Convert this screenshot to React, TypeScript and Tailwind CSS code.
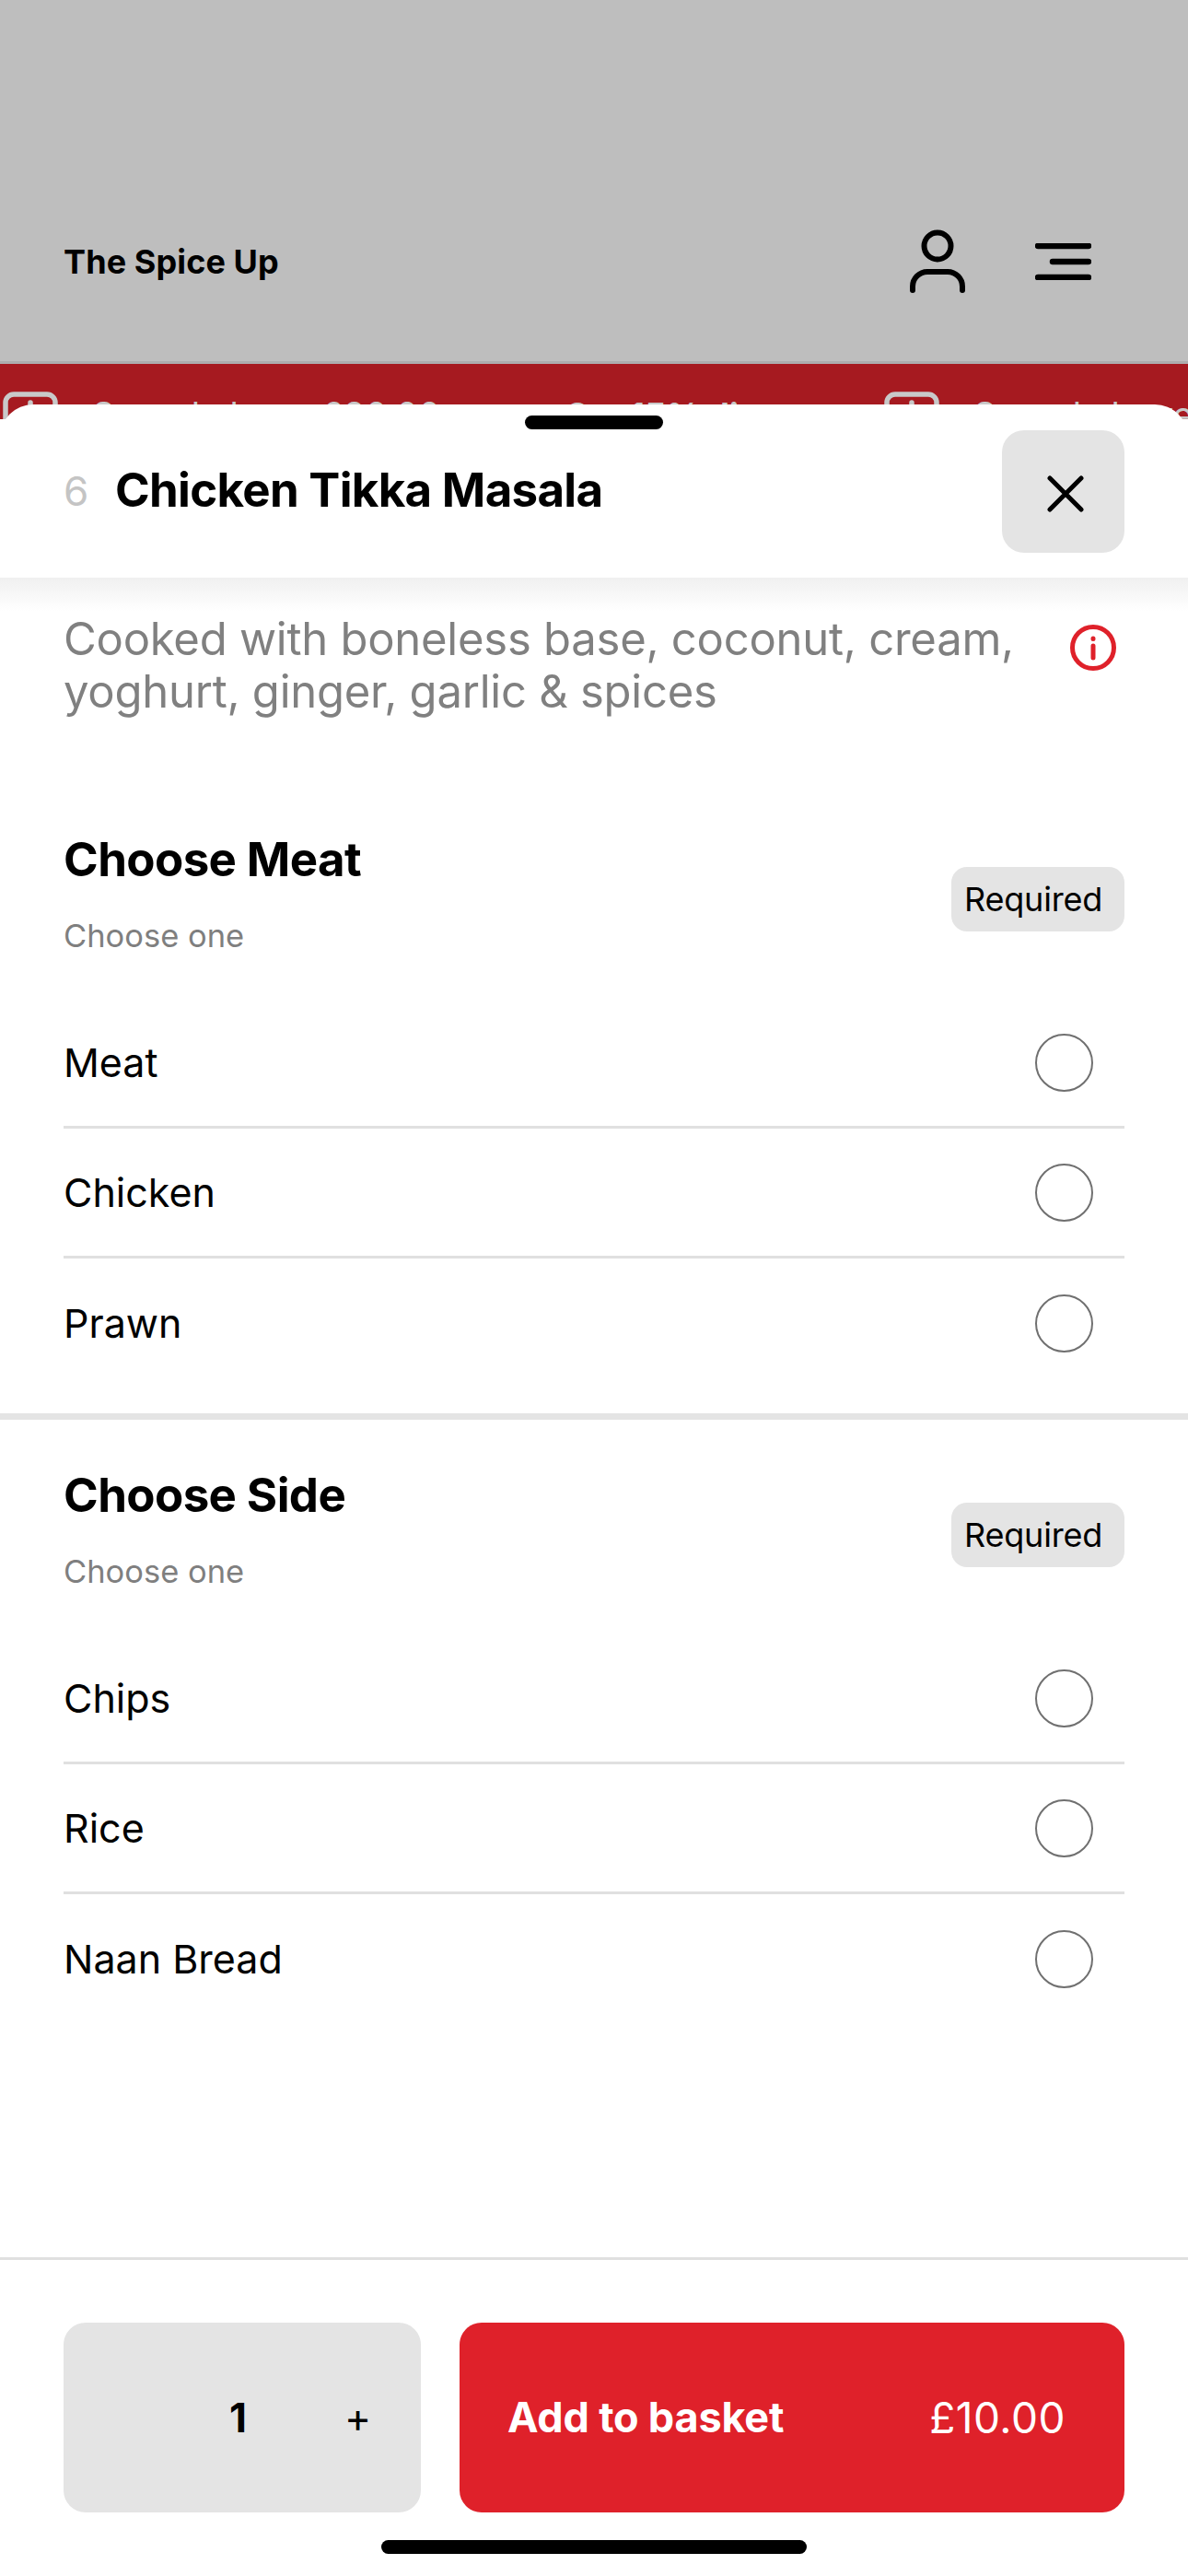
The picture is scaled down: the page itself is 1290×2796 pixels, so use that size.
import React from 'react'

const sections = [
  { title: 'Choose Meat', options: ['Meat', 'Chicken', 'Prawn'] },
  { title: 'Choose Side', options: ['Chips', 'Rice', 'Naan Bread'] },
]

function PromoTag() {
  return (
    <div className="flex items-start shrink-0 w-[957px]">
      <svg className="shrink-0" width="60" height="60" viewBox="0 0 60 60" fill="none" stroke="#c9c9c9" strokeWidth="5.5" strokeLinecap="round">
        <rect x="3" y="3" width="54" height="54" rx="9" />
        <path d="M30 12v36M14 30h32" />
      </svg>
      <span className="ml-[37px] mt-[5px] w-[513px] shrink-0 text-[38.5px] leading-[40px] text-[#c9c9c9] whitespace-nowrap">Spend above £20.00</span>
      <span className="mt-[6px] text-[36.500px] leading-[40px] font-bold text-[#c9c9c9] whitespace-nowrap">Get 15% discount</span>
    </div>
  )
}

function OptionGroup({ title, options, last }: { title: string; options: string[]; last?: boolean }) {
  return (
    <section className={last ? 'px-[69px] pt-[51px]' : 'px-[69px] pt-[123px] pb-[27px] border-b-[7px] border-[#e4e4e4]'}>
      <div className="flex items-center justify-between">
        <div>
          <h2 className="text-[51px] leading-[62px] font-bold text-black tracking-[-0.6px]">{title}</h2>
          <p className="mt-[32px] text-[34.5px] leading-[40px] text-[#7f7f7f]">Choose one</p>
        </div>
        <span className="flex items-center w-[188px] h-[70px] mt-[14px] pl-[14px] rounded-[17px] bg-[#e4e4e4] text-[36px] tracking-[-0.2px] text-black">Required</span>
      </div>
      <ul className="mt-[48px]">
        {options.map((option, index) => (
          <li
            key={option}
            className={index === options.length - 1
              ? 'flex items-center justify-between h-[141px] pr-[34px]'
              : 'flex items-center justify-between h-[141px] pr-[34px] border-b-[3px] border-[#e0e0e0]'}
          >
            <span className="text-[43px] text-black">{option}</span>
            <span className="w-[63px] h-[63px] rounded-full border-2 border-[#707070]" />
          </li>
        ))}
      </ul>
    </section>
  )
}

export default function App() {
  return (
    <div className="relative w-[1290px] h-[2796px] overflow-hidden bg-white font-['Inter',sans-serif]">
      {/* Page behind the sheet, dimmed */}
      <header className="flex items-center justify-between h-[395px] pt-[176px] pl-[69px] pr-[105px] bg-[#bebebe] border-b-[3px] border-[#adadad]">
        <span className="text-[36px] font-bold text-black tracking-[0.1px]">The Spice Up</span>
        <div className="flex items-center gap-[75px]">
          <svg width="62" height="70" viewBox="0 0 62 70" fill="none" stroke="black" strokeWidth="6" strokeLinecap="round">
            <circle cx="31" cy="18" r="14.500" />
            <path d="M4 66v-4a16 16 0 0 1 16-16h22a16 16 0 0 1 16 16v4" />
          </svg>
          <svg width="61" height="40" viewBox="0 0 61 40" fill="none" stroke="black" strokeWidth="6.500" strokeLinecap="round">
            <path d="M3 3h55M19 20h39M3 37h55" />
          </svg>
        </div>
      </header>
      <div className="flex h-[60px] pt-[30px] pl-[3px] bg-[#a61a20] overflow-hidden">
        <PromoTag />
        <PromoTag />
      </div>

      {/* Item sheet */}
      <div className="absolute left-0 right-0 top-[439px] bottom-0 flex flex-col bg-white rounded-t-[36px]">
        <div className="absolute top-[12px] left-[570px] w-[150px] h-[15px] rounded-full bg-black" />
        <div className="flex items-center justify-between h-[188px] pt-[28px] pb-[27px] pl-[69px] pr-[69px] shrink-0">
          <div className="flex items-center -mt-[2px]">
            <span className="w-[56px] text-[44px] text-[#c4c4c4]">6</span>
            <h1 className="text-[51px] font-bold text-black tracking-[-0.7px]">Chicken Tikka Masala</h1>
          </div>
          <button className="flex items-center justify-center w-[133px] h-[133px] rounded-[24px] bg-[#e4e4e4]">
            <svg className="ml-[4px] mt-[4px]" width="40" height="40" viewBox="0 0 40 40" fill="none" stroke="black" strokeWidth="5" strokeLinecap="round">
              <path d="M3 3l34 34M37 3L3 37" />
            </svg>
          </button>
        </div>
        <div className="h-[36px] -mb-[36px] shrink-0 bg-gradient-to-b from-[#f0f0f0] to-white" />

        <div className="flex justify-between pl-[69px] pr-[78px] pt-[38px] shrink-0">
          <p className="w-[1060px] text-[49px] leading-[57px] tracking-[-0.25px] text-[#808080]">
            Cooked with boneless base, coconut, cream, yoghurt, ginger, garlic &amp; spices
          </p>
          <svg className="mt-[13px]" width="50" height="50" viewBox="0 0 50 50" fill="none" stroke="#df212a" strokeWidth="5" strokeLinecap="round">
            <circle cx="25" cy="25" r="22.500" />
            <path d="M25 23v13M25 15v.5" />
          </svg>
        </div>

        <OptionGroup title={sections[0].title} options={sections[0].options} />
        <OptionGroup title={sections[1].title} options={sections[1].options} last />

        <footer className="absolute left-0 right-0 bottom-0 h-[346px] bg-white border-t-[3px] border-[#e0e0e0] pt-[68px] px-[69px]">
          <div className="flex gap-[42px] h-[206px]">
            <div className="relative flex items-center w-[388px] rounded-[24px] bg-[#e4e4e4]">
              <span className="absolute left-[180px] text-[44px] font-bold text-black">1</span>
              <span className="absolute left-[305px] text-[44px] text-black">+</span>
            </div>
            <button className="flex flex-1 items-center justify-between pl-[52px] pr-[64px] rounded-[24px] bg-[#df212a] text-white text-[45px]">
              <span className="font-bold tracking-[-0.2px]">Add to basket</span>
              <span className="text-[46px] tracking-[0.5px]">£10.00</span>
            </button>
          </div>
          <div className="absolute left-[414px] bottom-[24px] w-[462px] h-[15px] rounded-full bg-black" />
        </footer>
      </div>
    </div>
  )
}
